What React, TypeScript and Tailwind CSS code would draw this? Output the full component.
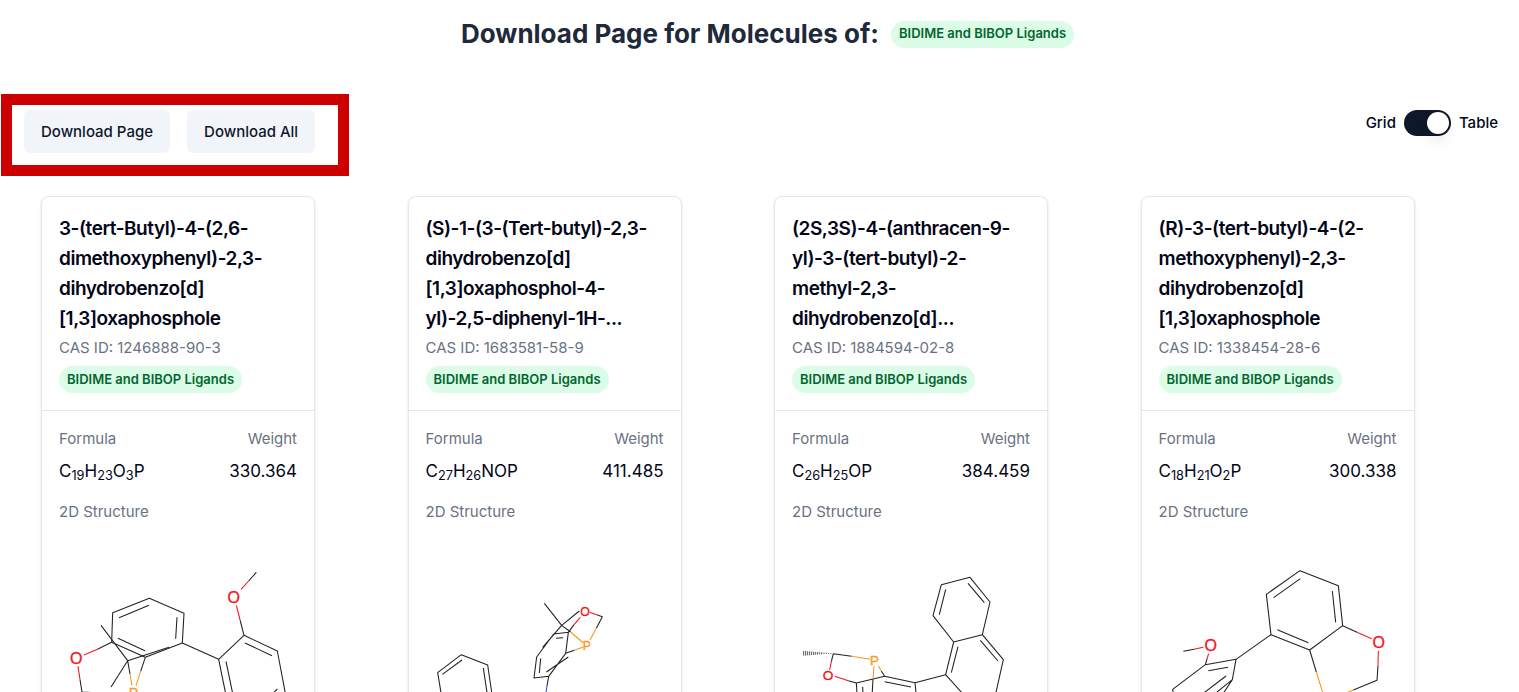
import { Fragment, useState, type ReactNode } from "react";

type Molecule = {
  name: string;
  cas: string;
  formula: [string, number?][];
  weight: string;
  viewBox: string;
  drawing: ReactNode;
};

const CATEGORY = "BIDIME and BIBOP Ligands";
const RED = "#f01820";
const ORANGE = "#f59a23";
const BLUE = "#4747e0";

function Bond({ d, color = "#222" }: { d: string; color?: string }) {
  return <path d={d} stroke={color} strokeWidth="3.2" fill="none" strokeLinejoin="round" />;
}

function Atom({ x, y, size, children }: { x: number; y: number; size: number; children: string }) {
  const color = children === "P" ? ORANGE : RED;
  return (
    <text x={x} y={y} fontSize={size} textAnchor="middle" fill={color} stroke={color} strokeWidth="1">
      {children}
    </text>
  );
}

const molecules: Molecule[] = [
  {
    name: "3-(tert-Butyl)-4-(2,6-dimethoxyphenyl)-2,3-dihydrobenzo[d][1,3]oxaphosphole",
    cas: "1246888-90-3",
    formula: [["C", 19], ["H", 23], ["O", 3], ["P"]],
    weight: "330.364",
    viewBox: "6 0 816 600",
    drawing: (
      <>
        <Bond d="M215 277 218 188 328 145 432 190 427 279 316 322 215 277M237 203 327 166M411 202 407 266M234 265 315 302" />
        <Bond d="M215 277 174 297M183 226 263 332 213 411M263 332 387 292M427 279 536 328 612 256 712 303 738 440 660 520 565 470 536 328M558 334 580 440M615 279 696 317M712 417 650 476M649 67 626 93M612 256 601 213M263 332 270 372M316 322 302 364M120 389 126 426 200 430" />
        <Bond color={RED} d="M174 297 132 315M626 93 603 118M601 213 589 166M114 348 120 389" />
        <Bond color={ORANGE} d="M270 372 276 407M302 364 288 407" />
        <Atom x={581} y={159} size={48}>O</Atom>
        <Atom x={109} y={341} size={48}>O</Atom>
        <Atom x={280} y={443} size={42}>P</Atom>
      </>
    ),
  },
  {
    name: "(S)-1-(3-(Tert-butyl)-2,3-dihydrobenzo[d][1,3]oxaphosphol-4-yl)-2,5-diphenyl-1H-...",
    cas: "1683581-58-9",
    formula: [["C", 27], ["H", 26], ["NOP"]],
    weight: "411.485",
    viewBox: "12 0 816 600",
    drawing: (
      <>
        <Bond d="M418 160 470 226 523 183M470 226 413 292M470 226 497 246M490 247 446 252 395 321 387 384 431 379 482 310 490 247M474 263 453 265M407 325 403 369M424 366 490 321M490 247 507 224M577 195 592 200 574 235M482 310 508 301M431 379 426 408" />
        <Bond d="M110 440 98 368 169 314 248 345 262 440 190 500 110 440M112 373 171 330M235 354 247 434" />
        <Bond color={RED} d="M507 224 526 202M554 187 577 195" />
        <Bond color={ORANGE} d="M497 246 535 279M508 301 535 291M574 235 555 270" />
        <Bond color={BLUE} d="M426 408 421 440" />
        <Atom x={540} y={198} size={37}>O</Atom>
        <Atom x={545} y={299} size={36}>P</Atom>
      </>
    ),
  },
  {
    name: "(2S,3S)-4-(anthracen-9-yl)-3-(tert-butyl)-2-methyl-2,3-dihydrobenzo[d]...",
    cas: "1884594-02-8",
    formula: [["C", 26], ["H", 25], ["OP"]],
    weight: "384.459",
    viewBox: "0 0 816 600",
    drawing: (
      <>
        <Bond d="M536 276 474 197 499 104 585 82 645 156 622 254 536 276 512 374 580 450 660 440 685 329 622 254M493 194 512 118M579 100 628 158M549 290 529 368M616 271 669 333M512 374 420 398 329 379 244 399 250 500 340 540 430 500 420 398M329 395 408 411M263 410 266 480M175 311 169 335M175 311 230 319M244 399 220 392M329 379 319 363M294 388 291 440" />
        <path
          d="M86 303v14M92 303v14M98 304v12M104 304v12M110 305v10M116 305v10M122 306v8M128 306v8M134 307v6M140 307v6M147 308v4M154 308v4M161 309v3M168 309v3"
          stroke="#333"
          strokeWidth="2.5"
        />
        <Bond color={RED} d="M169 335 164 360M179 379 220 392" />
        <Bond color={ORANGE} d="M230 319 286 328M310 347 319 363M297 349 294 388" />
        <Atom x={159} y={391} size={41}>O</Atom>
        <Atom x={298} y={344} size={40}>P</Atom>
      </>
    ),
  },
  {
    name: "(R)-3-(tert-butyl)-4-(2-methoxyphenyl)-2,3-dihydrobenzo[d][1,3]oxaphosphole",
    cas: "1338454-28-6",
    formula: [["C", 18], ["H", 21], ["O", 2], ["P"]],
    weight: "300.338",
    viewBox: "6 0 816 600",
    drawing: (
      <>
        <Bond d="M393 254 379 133 480 62 595 107 608 227 509 300 393 254M401 143 481 86M577 123 587 217M412 239 505 278M393 254 288 328 196 344 98 418 110 500 190 520 277 389 288 328M264 352 205 362M258 378 190 430M277 389 220 435M130 304 162 298M196 344 201 327M608 227 651 247M714 347 711 391 640 420M509 300 529 366" />
        <Bond color={RED} d="M162 298 190 292M201 327 206 311M651 247 695 266M715 302 714 347" />
        <Bond color={ORANGE} d="M529 366 550 433M640 420 610 432" />
        <Atom x={212} y={304} size={48}>O</Atom>
        <Atom x={716} y={294} size={48}>O</Atom>
        <Atom x={570} y={486} size={48}>P</Atom>
      </>
    ),
  },
];

function Badge() {
  return (
    <span className="inline-flex h-[27px] items-center rounded-full bg-green-100 px-2 text-[13px] font-semibold whitespace-nowrap text-green-800">
      {CATEGORY}
    </span>
  );
}

function MoleculeCard({ molecule }: { molecule: Molecule }) {
  return (
    <article className="w-[274px] rounded-lg border border-slate-200 bg-white shadow-sm">
      <header className="border-b border-slate-200 p-[17px]">
        <h2 className="text-[19px] leading-[30px] font-semibold tracking-tight text-slate-950">
          {molecule.name}
        </h2>
        <p className="mt-0.5 mb-[7px] text-[15px] leading-[23px] text-gray-500">CAS ID: {molecule.cas}</p>
        <div className="flex">
          <Badge />
        </div>
      </header>
      <div className="px-[17px] pt-4 text-[15px] leading-[23px] text-gray-500">
        <dl className="flex justify-between">
          <div>
            <dt>Formula</dt>
            <dd className="mt-[9px] text-[17px] leading-6 text-slate-950">
              {molecule.formula.map(([symbol, count]) => (
                <Fragment key={symbol}>
                  {symbol}
                  {count && <sub>{count}</sub>}
                </Fragment>
              ))}
            </dd>
          </div>
          <div className="text-right">
            <dt>Weight</dt>
            <dd className="mt-[9px] text-[17px] leading-6 text-slate-950">{molecule.weight}</dd>
          </div>
        </dl>
        <h3 className="mt-[17px]">2D Structure</h3>
      </div>
      <svg
        viewBox={molecule.viewBox}
        className="mt-[27px] block w-full font-['Liberation_Sans',sans-serif]"
        role="img"
        aria-label={molecule.name}
      >
        {molecule.drawing}
      </svg>
    </article>
  );
}

export default function App() {
  const [table, setTable] = useState(true);
  const button = "h-[43px] rounded-md bg-slate-100 px-[17px] pt-0.5 text-[15px] font-medium text-slate-900";

  return (
    <div className="h-screen overflow-hidden bg-white font-['Inter',sans-serif] text-slate-950">
      <div className="flex items-center justify-center gap-3 pt-[17px] pl-4">
        <h1 className="text-[26px] leading-[34px] font-bold tracking-normal text-gray-800">
          Download Page for Molecules of:
        </h1>
        <Badge />
      </div>
      <div className="mt-[43px] flex items-start justify-between pr-[21px] pl-px">
        <div className="flex gap-[17px] border-[11px] border-[#cc0000] pt-[5px] pr-[23px] pb-3 pl-3">
          <button type="button" className={button}>Download Page</button>
          <button type="button" className={button}>Download All</button>
        </div>
        <label className="mt-4 flex items-center gap-2 text-[15px] font-medium">
          Grid
          <input
            type="checkbox"
            role="switch"
            className="peer sr-only"
            checked={table}
            onChange={(event) => setTable(event.target.checked)}
          />
          <span className="flex h-[26px] w-[47px] items-center rounded-full bg-slate-900 px-0.5 peer-checked:justify-end">
            <span className="size-[22px] rounded-full bg-white shadow-lg" />
          </span>
          Table
        </label>
      </div>
      <main className="mt-5 grid grid-cols-4 pr-[29px] pl-6">
        {molecules.map((molecule) => (
          <div key={molecule.cas} className="pl-[17px]">
            <MoleculeCard molecule={molecule} />
          </div>
        ))}
      </main>
    </div>
  );
}
